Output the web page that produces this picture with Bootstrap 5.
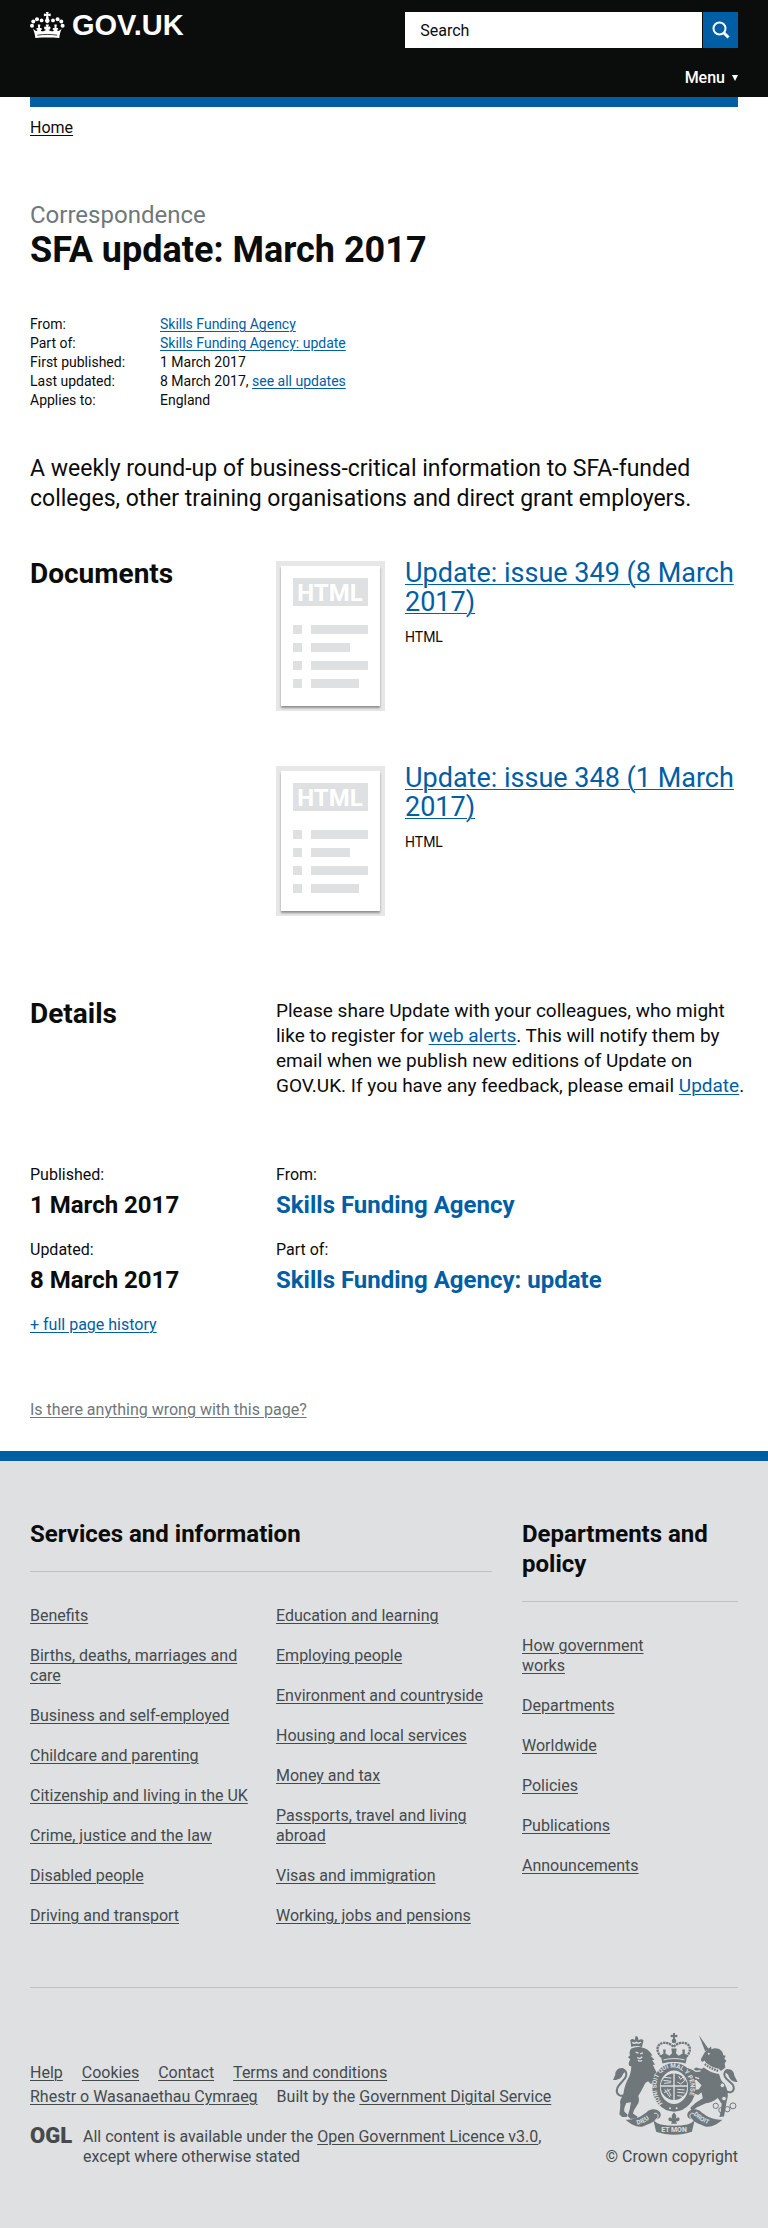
<!DOCTYPE html>
<html lang="en">
<head>
<meta charset="utf-8">
<meta name="viewport" content="width=device-width, initial-scale=1">
<title>SFA update: March 2017 - GOV.UK</title>
<link rel="stylesheet" href="https://cdn.jsdelivr.net/npm/bootstrap@5.3.0/dist/css/bootstrap.min.css">
<style>
  :root { --ink: #0b0c0c; --blue: #005ea5; --grey: #6f777b; --foot: #dee0e2; --foot-ink: #454a4c; --rule: #bfc1c3; }
  body { font-family: Roboto, "Liberation Sans", sans-serif; font-size: 16px; line-height: 20px; color: var(--ink); background: #fff; }
  a { color: var(--blue); text-underline-offset: 2px; text-decoration-thickness: 1px; }
  h1, h2, h3, p, ul, dl, dd, dt { margin: 0; }
  dt { font-weight: 400; }
  .wrap { padding-left: 30px; padding-right: 30px; }
  .row { --bs-gutter-x: 30px; }

  .top-bar { background: var(--ink); padding: 12px 0 9px; color: #fff; }
  .brand { font: 700 29px/27px "Liberation Sans", Arial, sans-serif; color: #fff; gap: 7px; }
  .top-tools { width: 47%; gap: 20px; }
  .search-box { height: 36px; border: 0; border-radius: 0; padding: 0 15px; font-size: 16px; color: var(--ink); }
  .search-box::placeholder { color: var(--ink); opacity: 1; }
  .search-go { flex: 0 0 35px; height: 36px; margin-left: 1px; background: var(--blue); border: 0; border-radius: 0; }
  .menu-btn { font-size: 16px; line-height: 20px; font-weight: 500; color: #fff; gap: 7px; }
  .blue-strip { height: 10px; background: var(--blue); }
  .crumb { padding-top: 11px; }
  .crumb a { color: var(--ink); }

  .title-block { margin-top: 62px; }
  .kicker { font-size: 24px; line-height: 30px; color: var(--grey); }
  .page-title { font-size: 36px; line-height: 40px; font-weight: 700; }
  .meta { display: grid; grid-template-columns: 130px 1fr; font-size: 14px; line-height: 19px; margin-top: 45px; }
  .intro { font-size: 23px; line-height: 30px; margin-top: 44px; }
  .side-title { font-size: 28px; line-height: 29px; font-weight: 700; }
  .docs { margin-top: 45px; }
  .doc-list { gap: 53px; }
  .thumb { flex: none; margin: 2px 20px 0 0; border: 5px solid #e7e7e7; background: #e7e7e7; }
  .thumb svg { display: block; background: #fff; box-shadow: 0 2px 2px rgba(11, 12, 12, .4); }
  .doc-title { font-size: 27px; line-height: 29px; font-weight: 400; }
  .doc-type { font-size: 14px; margin-top: 10px; }
  .details { margin-top: 82px; }
  .details .side-title { padding-top: 1px; }
  .prose { font-size: 19px; line-height: 25px; }
  .dates { margin-top: 67px; }
  .dates dd { font-size: 24px; line-height: 30px; font-weight: 700; margin: 5px 0 20px; }
  .dates dd a { text-decoration: none; }
  .report { margin: 65px 0 31px; }
  .report a { color: var(--grey); }

  .site-foot { background: var(--foot); border-top: 10px solid var(--blue); padding: 58px 0 62px; color: var(--foot-ink); }
  .site-foot a { color: var(--foot-ink); }
  .foot-title { font-size: 24px; line-height: 30px; font-weight: 700; color: var(--ink); padding-bottom: 22px; border-bottom: 1px solid var(--rule); margin-bottom: 34px; }
  .foot-list li { margin-bottom: 20px; }
  .narrow { width: 66%; }
  .foot-base { border-top: 1px solid var(--rule); margin-top: 41px; padding-top: 45px; }
  .foot-links { padding-top: 28px; line-height: 24px; column-gap: 19px; margin-bottom: 18px; }
  .ogl { font-size: 22px; font-weight: 900; line-height: 18px; width: 53px; flex: none; text-decoration: none; }
  .crest { display: block; margin: 0 0 12px auto; }
</style>
</head>
<body>
<header>
  <div class="top-bar">
    <div class="wrap d-flex justify-content-between align-items-start">
      <a href="#" class="brand d-flex text-decoration-none">
        <svg width="35" height="27" viewBox="0 0 35 27" fill="#fff" aria-hidden="true">
          <path d="M15.9 0h2.8l-.5 1.9 2.5-.5v2.9l-2.5-.5.6 3.2a2.3 2.3 0 1 1-3 0l.6-3.2-2.5.5V1.400l2.500.5z"/>
          <circle cx="11.600" cy="8.400" r="1.900"/><circle cx="7" cy="7.200" r="2"/><circle cx="3.300" cy="9.500" r="2"/><circle cx="2" cy="13.700" r="2"/>
          <circle cx="23" cy="8.400" r="1.900"/><circle cx="27.600" cy="7.200" r="2"/><circle cx="31.300" cy="9.500" r="2"/><circle cx="32.600" cy="13.700" r="2"/>
          <path d="M5.300 26C5 22 4 19 2.800 16.500c1.500 1.500 2.800 2.700 4 2.500 1.200-.2.400-1.800-.6-1.700 0-1.200 1.300-1.700 2-1.100L7.800 12.500h2.500l-.4 3.800c1-.7 2.300 0 2.100 1.200-1.200-.3-1.700 1.500-.2 1.800 1.800.3 3.300-.8 4.600-1.800-.8.400-2.300.3-2.300-1.500s1.600-1.700 2.200-.9l-.6-2.700h3.200l-.6 2.700c.6-.8 2.200-.9 2.200.9s-1.500 1.900-2.300 1.500c1.300 1 2.800 2.100 4.600 1.800 1.500-.3 1-2.100-.2-1.800-.2-1.200 1.100-1.900 2.100-1.200l-.4-3.800h2.500l-.4 3.700c.7-.6 2-.1 2 1.100-1-.1-1.800 1.500-.6 1.700 1.200.2 2.500-1 4-2.500-1.200 2.500-2.200 5.500-2.500 9.500-8-.6-16-.6-24 0z"/>
          <path d="M7.400 23.200c6.500-1 13.300-1 19.800 0" stroke="#0b0c0c" stroke-width=".8" fill="none"/>
        </svg>
        <span>GOV.UK</span>
      </a>
      <div class="top-tools d-flex flex-column">
        <form class="d-flex" role="search">
          <label for="q" class="visually-hidden">Search</label>
          <input id="q" type="search" class="form-control search-box" placeholder="Search">
          <button type="button" class="search-go d-flex align-items-center justify-content-center p-0" aria-label="Search">
            <svg width="18" height="18" viewBox="0 0 18 18" fill="none" stroke="#fff" aria-hidden="true"><circle cx="7.500" cy="7.500" r="6" stroke-width="2"/><path d="M12 12l4.500 4.500" stroke-width="3"/></svg>
          </button>
        </form>
        <button type="button" class="menu-btn btn p-0 border-0 d-flex align-items-center align-self-end">Menu
          <svg width="6" height="6" viewBox="0 0 6 6" aria-hidden="true"><path d="M0 0h6L3 6z" fill="#fff"/></svg>
        </button>
      </div>
    </div>
  </div>
  <div class="wrap"><div class="blue-strip"></div></div>
</header>

<main class="wrap">
  <nav class="crumb" aria-label="Breadcrumb"><a href="#">Home</a></nav>

  <div class="title-block">
    <p class="kicker">Correspondence</p>
    <h1 class="page-title">SFA update: March 2017</h1>
  </div>

  <dl class="meta">
    <dt>From:</dt><dd><a href="#">Skills Funding Agency</a></dd>
    <dt>Part of:</dt><dd><a href="#">Skills Funding Agency: update</a></dd>
    <dt>First published:</dt><dd>1 March 2017</dd>
    <dt>Last updated:</dt><dd>8 March 2017, <a href="#">see all updates</a></dd>
    <dt>Applies to:</dt><dd>England</dd>
  </dl>

  <p class="intro">A weekly round-up of business-critical information to SFA-funded colleges, other training organisations and direct grant employers.</p>

  <section class="row docs">
    <div class="col-4"><h2 class="side-title">Documents</h2></div>
    <div class="col-8 d-flex flex-column doc-list">
      <article class="d-flex align-items-start">
        <a href="#" class="thumb" aria-label="Update: issue 349">
          <svg width="99" height="140" viewBox="5 5 99 140" fill="#dee0e2">
            <path d="M17 17h75v28H17zM17 64h9v9h-9zM35 64h57v9H35zM17 82h9v9h-9zM35 82h39v9H35zM17 100h9v9h-9zM35 100h57v9H35zM17 118h9v9h-9zM35 118h48v9H35z"/>
            <text x="54" y="40" text-anchor="middle" font-size="24" font-weight="700" fill="#fff">HTML</text>
          </svg>
        </a>
        <div>
          <h3 class="doc-title"><a href="#">Update: issue 349 (8 March 2017)</a></h3>
          <p class="doc-type">HTML</p>
        </div>
      </article>
      <article class="d-flex align-items-start">
        <a href="#" class="thumb" aria-label="Update: issue 348">
          <svg width="99" height="140" viewBox="5 5 99 140" fill="#dee0e2">
            <path d="M17 17h75v28H17zM17 64h9v9h-9zM35 64h57v9H35zM17 82h9v9h-9zM35 82h39v9H35zM17 100h9v9h-9zM35 100h57v9H35zM17 118h9v9h-9zM35 118h48v9H35z"/>
            <text x="54" y="40" text-anchor="middle" font-size="24" font-weight="700" fill="#fff">HTML</text>
          </svg>
        </a>
        <div>
          <h3 class="doc-title"><a href="#">Update: issue 348 (1 March 2017)</a></h3>
          <p class="doc-type">HTML</p>
        </div>
      </article>
    </div>
  </section>

  <section class="row details">
    <div class="col-4"><h2 class="side-title">Details</h2></div>
    <div class="col-8 pe-0"><p class="prose">Please share Update with your colleagues, who might like to register for <a href="#">web alerts</a>. This will notify them by email when we publish new editions of Update on GOV.UK. If you have any feedback, please email <a href="#">Update</a>.</p></div>
  </section>

  <section class="row dates">
    <div class="col-4">
      <dl><dt>Published:</dt><dd>1 March 2017</dd><dt>Updated:</dt><dd>8 March 2017</dd></dl>
      <a href="#">+ full page history</a>
    </div>
    <div class="col-8">
      <dl><dt>From:</dt><dd><a href="#">Skills Funding Agency</a></dd><dt>Part of:</dt><dd><a href="#">Skills Funding Agency: update</a></dd></dl>
    </div>
  </section>

  <p class="report"><a href="#">Is there anything wrong with this page?</a></p>
</main>

<footer class="site-foot">
  <div class="wrap">
    <div class="row">
      <div class="col-8">
        <h2 class="foot-title">Services and information</h2>
        <div class="row">
          <ul class="col-6 list-unstyled foot-list">
            <li><a href="#">Benefits</a></li>
            <li><a href="#">Births, deaths, marriages and care</a></li>
            <li><a href="#">Business and self-employed</a></li>
            <li><a href="#">Childcare and parenting</a></li>
            <li class="text-nowrap"><a href="#">Citizenship and living in the UK</a></li>
            <li><a href="#">Crime, justice and the law</a></li>
            <li><a href="#">Disabled people</a></li>
            <li><a href="#">Driving and transport</a></li>
          </ul>
          <ul class="col-6 list-unstyled foot-list">
            <li><a href="#">Education and learning</a></li>
            <li><a href="#">Employing people</a></li>
            <li><a href="#">Environment and countryside</a></li>
            <li><a href="#">Housing and local services</a></li>
            <li><a href="#">Money and tax</a></li>
            <li><a href="#">Passports, travel and living abroad</a></li>
            <li><a href="#">Visas and immigration</a></li>
            <li><a href="#">Working, jobs and pensions</a></li>
          </ul>
        </div>
      </div>
      <div class="col-4">
        <h2 class="foot-title">Departments and policy</h2>
        <ul class="list-unstyled foot-list narrow">
          <li><a href="#">How government works</a></li>
          <li><a href="#">Departments</a></li>
          <li><a href="#">Worldwide</a></li>
          <li><a href="#">Policies</a></li>
          <li><a href="#">Publications</a></li>
          <li><a href="#">Announcements</a></li>
        </ul>
      </div>
    </div>

    <div class="foot-base">
      <div class="row">
        <div class="col-9">
          <ul class="foot-links list-unstyled d-flex flex-wrap">
            <li><a href="#">Help</a></li>
            <li><a href="#">Cookies</a></li>
            <li><a href="#">Contact</a></li>
            <li><a href="#">Terms and conditions</a></li>
            <li><a href="#">Rhestr o Wasanaethau Cymraeg</a></li>
            <li>Built by the <a href="#">Government Digital Service</a></li>
          </ul>
          <div class="d-flex align-items-start">
            <a href="#" class="ogl">OGL</a>
            <p>All content is available under the <a href="#">Open Government Licence v3.0</a>, except where otherwise stated</p>
          </div>
        </div>
        <div class="col-3 text-end">
          <svg class="crest" width="125" height="102" viewBox="69 38 375 308" fill="#6f777b" stroke="none" aria-hidden="true">
            <!-- lion, crowned -->
            <path d="M123 80l-3-20c4-5 9-5 13 0l2-9c-2-4 6-4 8 0l2 9c5-5 11-4 15 0l-5 21c-9-5-22-5-32-1z"/>
            <path d="M126 66q6 6 12 0q6 6 14-1" stroke="#dee0e2" stroke-width="4" fill="none"/>
            <path d="M126 84c12-5 26-4 36 0 14 4 20 14 25 22l-6 1 12 12-7 1 9 14-7 0 7 15c6 8 6 18 0 24l8 8-4 9-9-4-8 6-8-8-8 4c-7 14-14 26-22 40 4 10 3 20-4 29-5 8-10 15-12 24l14 10-4 6h-18l-8-8 6-20 4-22-14 2c-4 9-8 17-6 26l10 10-3 7h-14l-8-9c2-14 4-28 2-38 2-9 6-15 10-22 2-18 8-38 18-54 4-10 6-22 6-30l-6-2c-4-8 1-15 3-20l-7-6 6-5c-3-9 0-18 5-22z"/>
            <path d="M136 96l9 3M158 98l-8 3M141 112l8 3 7-5M143 120q6 5 13 1" stroke="#dee0e2" stroke-width="4" fill="none"/>
            <path d="M106 225c-18 8-30-4-26-18 4-16 22-24 27-38 3-10-1-20-9-20" stroke="#6f777b" stroke-width="6" fill="none"/>
            <path d="M100 145c-14-6-27 8-25 18l-7 17c12 0 24-4 28-14 3-8 8-9 11-12z"/>
            <!-- unicorn -->
            <path d="M327 44l30 43-11 6z"/>
            <path d="M352 88l12-9 1 8c17-8 34 2 36 18l7 2-4 9 6 6-5 8 2 12-12 10-28-9-18-13c-3-8-4-10-8-7-5 5-11-2-5-11 6-10 10-19 18-24z"/>
            <circle cx="357" cy="101" r="3" fill="#dee0e2"/>
            <path d="M346 131c12 10 28 17 43 20" stroke="#dee0e2" stroke-width="8" fill="none"/>
            <path d="M345 132c12 9 28 17 43 21" stroke="#6f777b" stroke-width="7" stroke-dasharray="5 3" fill="none"/>
            <path d="M342 142c14 11 30 18 46 20l6 18 14 18c7 16 9 30 3 46l-8 46-14 2 4-16 3-24-12-18c-12 10-24 14-36 16l-28 13-14 12-5-11 16-15 22-14-4-18-10 8-14-5 4-10 12-2 8-12-15-16c-6 0-12-2-10-8l-14-3 3-8-11-9 5-8 14 5 12-7 16 5z"/>
            <path d="M304 144l14 10 14-2M316 172l12 4M332 196l-10 8" stroke="#dee0e2" stroke-width="4" fill="none"/>
            <path d="M405 210c16 14 30 4 27-10-4-14-22-18-27-32-3-10 2-18 10-18" stroke="#6f777b" stroke-width="6" fill="none"/>
            <path d="M412 148c14-4 22 8 22 18l10 20c-12 0-22-6-26-16-2-8-8-10-14-14z"/>
            <g fill="none" stroke="#6f777b" stroke-width="3"><circle cx="430" cy="258" r="9"/><circle cx="413" cy="268" r="8"/><circle cx="395" cy="271" r="8"/><circle cx="378" cy="258" r="8"/></g>
            <g fill="#dee0e2" stroke="#6f777b" stroke-width="3"><circle cx="398" cy="196" r="7"/><circle cx="403" cy="236" r="7"/></g>
            <!-- royal crown -->
            <path d="M249 38h6v6l7-1v8l-7-1v7h-6v-7l-7 1v-8l7 1z"/><circle cx="252" cy="62" r="7"/>
            <path d="M214 110c-17-14-16-39 5-42 14-2 24 4 31 12 8-8 19-14 33-12 21 3 22 28 5 42" fill="none" stroke="#6f777b" stroke-width="7" stroke-dasharray="7 2"/>
            <path d="M212 106l8-6-1-12h8l-1 12 12 7 8-8-2-14h16l-2 14 8 8 12-7-1-12h8l-1 12 8 6-5 24c-24-6-46-6-70 0z"/>
            <path d="M220 119c20-5 44-5 64 0" fill="none" stroke="#dee0e2" stroke-width="3"/>
            <!-- garter and shield -->
            <ellipse cx="252" cy="202" rx="54" ry="62" fill="#dee0e2" stroke="#6f777b" stroke-width="23"/>
            <circle cx="252" cy="200" r="40"/>
            <path d="M252 158v84M211 198h82" stroke="#dee0e2" stroke-width="4"/>
            <path d="M222 172l22 2M220 181l24 3M222 190l20-2M266 168l6 10 8-8 4 12-12 10-10-6M224 208l16 24M232 206l11 22M222 218l20-10M262 208l22 2M262 217l22 2M262 227l16 2" stroke="#dee0e2" stroke-width="3" fill="none"/>
            <path id="garter" d="M218 251C190 218 194 164 226 148c30-14 64 2 74 38 5 22 0 46-15 64" fill="none"/>
            <text font-size="19" font-weight="700" fill="#dee0e2"><textPath href="#garter">HONI SOIT QUI MAL Y PENSE</textPath></text>
            <circle cx="240" cy="265" r="3" fill="#dee0e2"/><circle cx="260" cy="265" r="3" fill="#dee0e2"/>
            <!-- motto ribbon -->
            <path d="M106 300c26 2 50-10 68-27 12-8 28-6 36 5 5 9 0 19-10 20-10 9-26 17-42 22-18 4-36-6-52-20z"/>
            <path d="M398 300c-26 2-50-10-68-27-12-8-28-6-36 5-5 9 0 19 10 20 10 9 26 17 42 22 18 4 36-6 52-20z"/>
            <path d="M190 302c8 6 13 10 22 12 26 5 54 5 80 0 9-2 14-6 22-12l-8 34c-34 12-74 12-108 0z"/>
            <path d="M192 281c9-3 14 3 11 12l-8 9M312 281c-9-3-14 3-11 12l8 9" stroke="#dee0e2" stroke-width="3" fill="none"/>
            <path d="M252 278c9 8 8 15 3 21 9-12 19-3 11 5l-8 1 3 7h-18l3-7-8-1c-8-8 2-17 11-5-5-6-6-13 3-21z"/>
            <path id="m1" d="M141 315q28-6 52-31" fill="none"/><path id="m3" d="M310 284q24 25 54 32" fill="none"/>
            <g font-size="19" font-weight="700" fill="#dee0e2">
              <text><textPath href="#m1">DIEU</textPath></text>
              <text x="252" y="337" text-anchor="middle" font-size="21">ET MON</text>
              <text><textPath href="#m3">DROIT</textPath></text>
            </g>
          </svg>
          <span class="text-nowrap">© Crown copyright</span>
        </div>
      </div>
    </div>
  </div>
</footer>
<script src="https://cdn.jsdelivr.net/npm/bootstrap@5.3.0/dist/js/bootstrap.bundle.min.js"></script>
</body>
</html>
